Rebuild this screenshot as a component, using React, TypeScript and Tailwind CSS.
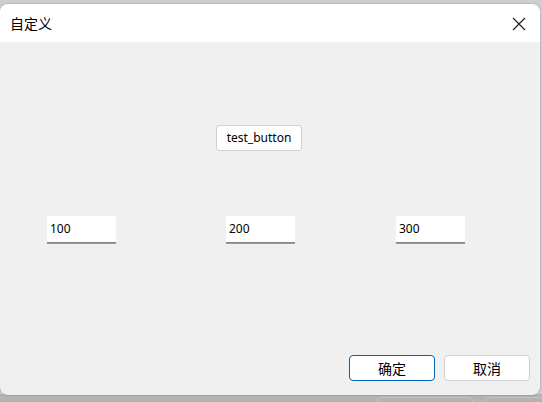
import React from "react";

export default function App() {
  const latin = { fontFamily: '"Noto Sans", "Liberation Sans", "Noto Sans CJK SC", sans-serif' };
  const cjk = { fontFamily: '"Noto Sans CJK SC", "Liberation Sans", sans-serif' };
  return (
    <div className="relative w-[542px] h-[402px] overflow-hidden bg-[#cfcfcf]">
      {/* desktop strip below window */}
      <div className="absolute left-0 right-0 top-[394px] h-[8px] bg-[#b3b3b3]">
        <div className="absolute left-[377px] top-[3px] w-[96px] h-[8px] border border-[#c4c4c4] rounded-sm" />
        <div className="absolute left-[485px] top-[3px] w-[80px] h-[8px] border border-[#c4c4c4] rounded-sm" />
      </div>
      {/* dialog window */}
      <div className="absolute left-0 top-[4px] w-[540px] h-[391px] rounded-[8px] overflow-hidden flex flex-col bg-[#f0f0f0] shadow-[0_0_2px_rgba(0,0,0,0.35)]">
        <div className="h-[38px] bg-white flex items-center justify-between pl-[10px] pr-[14px] shrink-0">
          <span className="text-[14px] text-black leading-none" style={cjk}>自定义</span>
          <svg width="14" height="14" viewBox="0 0 14 14" className="mt-[1px]">
            <path d="M1 1 L13 13 M13 1 L1 13" stroke="#1a1a1a" strokeWidth="1.1" />
          </svg>
        </div>
        <div className="flex flex-col flex-1">
          <div className="pt-[83px] pl-[216px]">
            <div
              className="w-[86px] h-[26px] bg-white border border-[#d0d0d0] rounded-[3px] flex items-center justify-center text-[12px] text-black"
              style={latin}
            >
              test_button
            </div>
          </div>
          <div className="flex pt-[65px] pl-[47px]">
            <div className="w-[69px] h-[27px] bg-white border-b border-[#858585] shadow-[0_1px_0_#9a9a9a] flex items-center pl-[3px] text-[12px] text-black" style={latin}>100</div>
            <div className="ml-[110px] w-[69px] h-[27px] bg-white border-b border-[#858585] shadow-[0_1px_0_#9a9a9a] flex items-center pl-[3px] text-[12px] text-black" style={latin}>200</div>
            <div className="ml-[101px] w-[69px] h-[27px] bg-white border-b border-[#858585] shadow-[0_1px_0_#9a9a9a] flex items-center pl-[3px] text-[12px] text-black" style={latin}>300</div>
          </div>
          <div className="flex pt-[112px] pl-[349px] gap-[9px]">
            <div className="w-[86px] h-[26px] bg-white border border-[#0067c0] rounded-[4px] flex items-center justify-center text-[14px] text-black" style={cjk}>确定</div>
            <div className="w-[86px] h-[26px] bg-white border border-[#d0d0d0] rounded-[4px] flex items-center justify-center text-[14px] text-black" style={cjk}>取消</div>
          </div>
        </div>
      </div>
    </div>
  );
}
